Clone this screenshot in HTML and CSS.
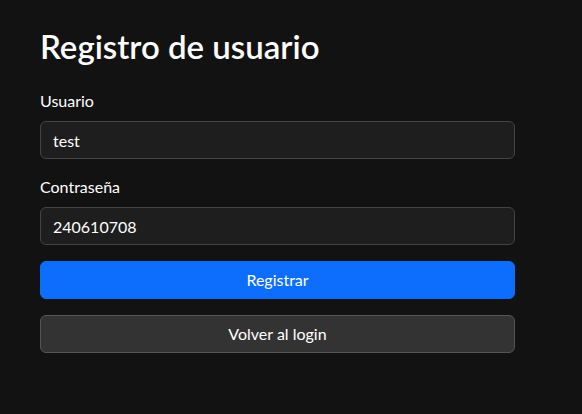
FILE: index.html
```html
<!DOCTYPE html>
<html lang="es">
<head>
<meta charset="utf-8">
<title>Registro de usuario</title>
<link rel="stylesheet" href="styles.css">
</head>
<body>
<main class="container">
  <h1 class="title">Registro de usuario</h1>
  <form class="form">
    <div class="field">
      <label class="label" for="user">Usuario</label>
      <input class="input" id="user" type="text" value="test">
    </div>
    <div class="field">
      <label class="label" for="pass">Contraseña</label>
      <input class="input" id="pass" type="text" value="240610708">
    </div>
    <button class="btn btn-primary" type="button">Registrar</button>
    <button class="btn btn-secondary" type="button">Volver al login</button>
  </form>
</main>
</body>
</html>
```

FILE: styles.css
```css
* { box-sizing: border-box; }
html, body {
  margin: 0;
  background: #121212;
  color: #fff;
  font-family: "Lato", "Noto Sans", sans-serif;
  font-size: 16px;
  line-height: 1.5;
}
.container {
  width: 475px;
  margin-left: 40px;
  padding-top: 27px;
}
.title {
  margin: 0 0 24px;
  font-size: 33px;
  font-weight: 600;
  line-height: 38px;
}
.form {
  display: flex;
  flex-direction: column;
}
.field {
  display: flex;
  flex-direction: column;
  margin-bottom: 16px;
}
.label {
  margin-bottom: 8px;
}
.input {
  height: 38px;
  padding: 6px 12px;
  font: inherit;
  color: #fff;
  background: #1e1e1e;
  border: 1px solid #444;
  border-radius: 6px;
  outline: none;
}
.btn {
  height: 38px;
  font: inherit;
  color: #fff;
  border-radius: 6px;
  border: 1px solid transparent;
  padding: 6px 12px;
  margin-bottom: 16px;
}
.btn-primary {
  background: #0d6efd;
  border-color: #0d6efd;
}
.btn-secondary {
  background: #333;
  border-color: #555;
}
```
